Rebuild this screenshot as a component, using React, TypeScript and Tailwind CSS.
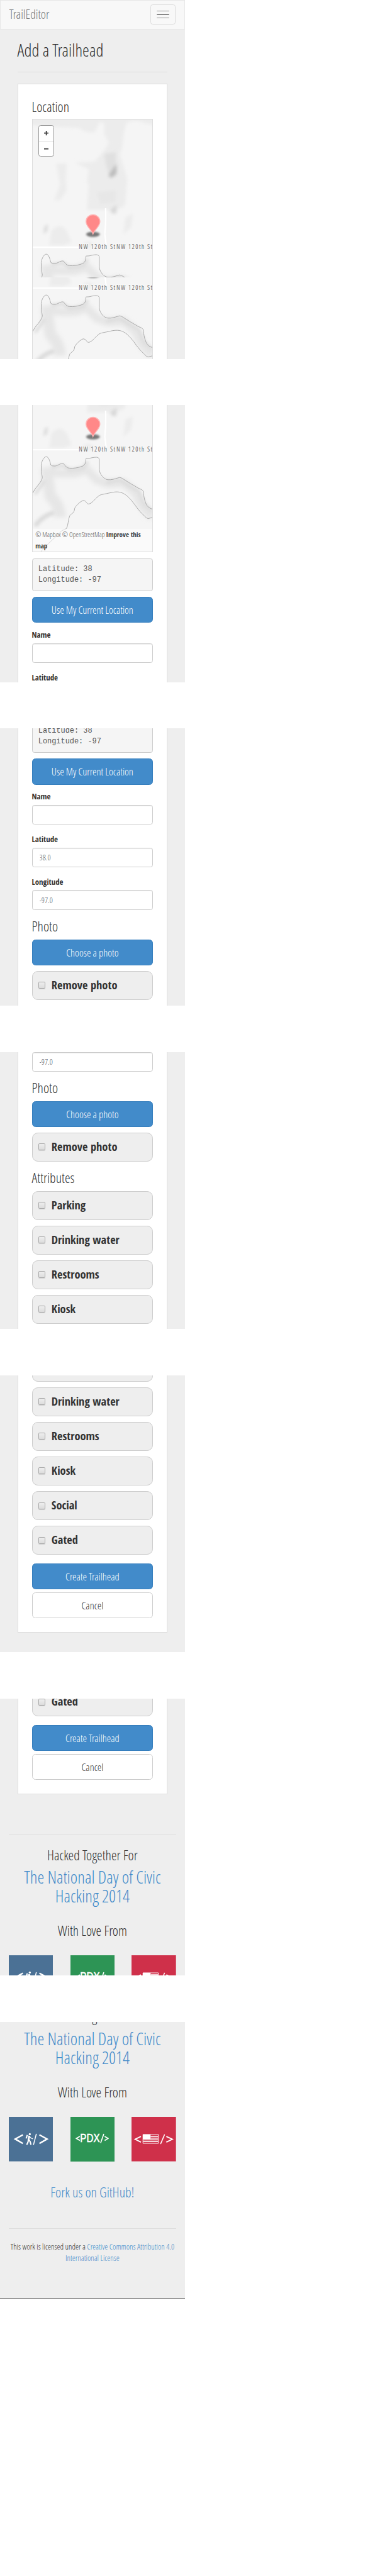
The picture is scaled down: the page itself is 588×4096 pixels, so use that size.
import type { ReactNode } from "react";

type Block = { height: number; card?: boolean; node: ReactNode };
type View = { from: number; height: number; gap: number };

function Terrain() {
  return (
    <svg className="block h-full w-full" viewBox="56 207 208 398" preserveAspectRatio="none">
      <defs>
        <filter id="soft" x="-30%" y="-30%" width="160%" height="160%">
          <feGaussianBlur stdDeviation="9" />
        </filter>
        <filter id="softer" x="-30%" y="-30%" width="160%" height="160%">
          <feGaussianBlur stdDeviation="13" />
        </filter>
        <filter id="pin" x="-30%" y="-60%" width="160%" height="220%">
          <feGaussianBlur stdDeviation="1.8" />
        </filter>
      </defs>
      <rect x="56" y="207" width="208" height="398" fill="#f5f5f5" />
      <g transform="scale(.33333)" filter="url(#soft)" fill="#ececec">
        <path d="M150 600H800V650L750 640Q700 615 655 640L640 700Q635 780 620 800L660 930L650 1060Q640 1090 560 1090H450L460 950L490 840L535 790L565 740L540 700V640L515 635L490 690L440 685L410 665L300 660L150 650Z" />
        <path d="M385 845L490 840L495 880L470 960L450 950L460 880Z" />
        <path d="M290 850L345 850L340 930L345 990L310 1040H280L310 960Z" />
        <path d="M265 1200Q310 1150 345 1200L370 1260L330 1275H255Z" />
        <path d="M430 1270Q455 1240 485 1270V1285H430ZM650 1130L690 1110L680 1180L640 1220Z" />
      </g>
      <g transform="scale(.33333)" filter="url(#soft)" fill="#e0e0e0">
        <path d="M540 800L600 790V915L570 920L550 860Z" />
        <path d="M500 1000L600 990V1050L520 1060Z" fill="#e7e7e7" />
        <path d="M230 1175L248 1165L243 1205L222 1215Z" fill="#dcdcdc" />
        <path d="M562 910L604 850V905L575 925Z" fill="#bcbcbc" />
        <path d="M570 1090L604 1065V1110H580Z" fill="#d8d8d8" />
      </g>
      <g transform="translate(0 339) scale(.33333)">
        <g filter="url(#softer)" fill="none" stroke="#e6e6e6" strokeWidth="44">
          <path d="M250 375L300 390L390 390L450 370L500 425L560 445L640 440L700 490L735 560L790 620" />
          <path d="M240 360Q245 420 260 510Q310 560 310 620" strokeWidth="60" />
        </g>
        <g filter="url(#soft)" fill="none" stroke="#dadada" strokeWidth="14">
          <path d="M265 360L325 350L360 375L430 365L455 330" />
          <path d="M550 440L620 425L720 485L745 550L790 590" />
          <path d="M180 665Q220 610 280 595" strokeWidth="22" />
          <path d="M230 430L180 500" />
        </g>
        <path d="M168 268H410M547 65Q550 130 543 200L550 255" fill="none" stroke="#fff" strokeWidth="7" />
        <g fill="none" stroke="#999" strokeWidth="2.6">
          <path d="M168 493Q178 472 195 454Q217 427 218 412Q211 380 212 348C216 320 229 304 239 304C252 306 257 328 262 347Q267 354 284 353C302 350 312 337 328 340C337 351 344 363 360 364C380 366 405 362 428 353C447 342 443 326 445 314L462 313C477 309 488 307 500 307Q515 309 514 320V372C518 398 538 422 559 424C578 426 596 419 607 416Q622 408 632 416Q680 447 718 468Q740 476 743 483C746 517 751 533 758 550Q768 572 792 577" />
          <path d="M792 620L768 626Q758 623 750 613Q725 590 709 568C691 542 667 510 641 496C620 485 600 485 570 492C545 498 528 500 518 504C496 516 477 550 458 550C447 550 448 532 430 532C413 538 389 563 386 574C385 600 365 600 360 613C352 632 353 660 344 677Q331 686 320 688Q306 703 285 723Q255 750 240 766L210 798" />
        </g>
      </g>
      <g className="[font-stretch:87.5%]" fontFamily="Open Sans, sans-serif" fontWeight="400" fontSize="11" fill="#707070" stroke="#f8f8f8" strokeWidth="2" paintOrder="stroke">
        <text x="136" y="431.7" textLength="63">NW 120th St</text>
        <text x="201" y="431" textLength="62.500">NW 120th St</text>
      </g>
      <ellipse cx="160.500" cy="406" rx="12" ry="4.500" fill="#777" filter="url(#pin)" />
      <path d="M160.500 405.500C158 398 148.500 392 148.500 384A12 12 0 0 1 172.500 384C172.500 392 163 398 160.500 405.500Z" fill="#ff8888" stroke="#ffb3b3" strokeWidth="1.6" />
    </svg>
  );
}

function MapPanel() {
  return (
    <div className="relative h-[400px] border border-[#ddd]">
      <Terrain />
      <div className="absolute top-[10px] left-[10px] flex h-[54px] w-7 flex-col rounded-[4px] border border-[#999] bg-white">
        <button className="flex flex-1 items-center justify-center border-b border-[#ddd]">
          <svg width="8" height="8" viewBox="0 0 8 8"><path d="M0 4H8M4 0V8" stroke="#404040" strokeWidth="2" /></svg>
        </button>
        <button className="flex flex-1 items-center justify-center">
          <svg width="8" height="8" viewBox="0 0 8 8"><path d="M0 4H8" stroke="#404040" strokeWidth="2" /></svg>
        </button>
      </div>
      <div className="absolute right-0 bottom-0 left-0 bg-white/50 pl-[5px] text-[12px] leading-[20px] whitespace-nowrap text-[#555]">
        <div>© Mapbox © OpenStreetMap <b className="font-['Open_Sans_Condensed'] font-bold text-[#404040]">Improve this</b></div>
        <div className="font-['Open_Sans_Condensed'] font-bold text-[#404040]">map</div>
      </div>
    </div>
  );
}

function Heading({ children }: { children: ReactNode }) {
  return <h3 className="pt-[14.500px] text-[24px] leading-[26.400px]">{children}</h3>;
}

function Button({ children, plain }: { children: ReactNode; plain?: boolean }) {
  return (
    <button
      className={
        plain
          ? "block h-[45px] w-full rounded-[6px] border border-[#ccc] bg-white text-[18px] leading-[43px] text-[#333]"
          : "block h-[45px] w-full rounded-[6px] border border-[#357ebd] bg-[#428bca] text-[18px] leading-[43px] text-white"
      }
    >
      {children}
    </button>
  );
}

function Field({ label, value }: { label: string; value?: string }) {
  return (
    <label className="flex h-full flex-col justify-end text-[14px]">
      <span className="mb-[5px] font-['Open_Sans_Condensed'] leading-5 font-bold">{label}</span>
      <input
        defaultValue={value}
        className="h-[34px] w-full rounded-[4px] border border-[#ccc] bg-white px-3 text-[14px] font-light text-[#555] shadow-[inset_0_1px_1px_rgba(0,0,0,0.075)]"
      />
    </label>
  );
}

function Check({ label }: { label: string }) {
  return (
    <label className="flex h-[50px] items-center rounded-[10px] border border-[#ccc] bg-[#eee] pl-[10px] font-['Open_Sans_Condensed'] text-[20px] leading-6 font-bold">
      <input
        type="checkbox"
        className="mr-[11px] h-3 w-3 appearance-none rounded-[2px] border border-[#a9a9a9] bg-gradient-to-b from-[#eee] to-[#dcdcdc] shadow-[0_1px_1px_rgba(0,0,0,0.12)]"
      />
      <span className="-mt-[2px]">{label}</span>
    </label>
  );
}

function HikerLogo() {
  return (
    <svg width="77" height="77" viewBox="45 531 231 231">
      <rect x="45" y="531" width="231" height="231" fill="#4b7195" />
      <g fill="none" stroke="#fff" strokeWidth="7">
        <path d="M118 624L78 646L118 669M204 624L244 646L204 669" strokeWidth="8" />
        <path d="M188 619L173 677" strokeWidth="5" />
        <path d="M151 629L147 652" strokeWidth="9" />
        <path d="M147 648L145 661L138 676M149 650L156 660L160 676" />
        <path d="M153 631L158 640L170 645" strokeWidth="4" />
        <path d="M141 625L135 643" strokeWidth="7" />
      </g>
      <circle cx="154" cy="620.500" r="5.500" fill="#fff" />
    </svg>
  );
}

function PdxLogo() {
  return (
    <div className="flex h-[77px] w-[76px] items-center justify-center bg-[#2d9455] pb-[3px]">
      <svg width="58" height="18" viewBox="0 0 58 18">
        <path d="M7.500 5.500L1.500 9L7.500 12.500M50.500 5.500L56.500 9L50.500 12.500M49 1L43.500 17" fill="none" stroke="#fff" strokeWidth="1.800" />
        <text x="8" y="15.700" textLength="34" lengthAdjust="spacingAndGlyphs" fontFamily="Liberation Sans, sans-serif" fontSize="19" fontWeight="400" stroke="#fff" strokeWidth=".6" fill="#fff">PDX</text>
      </svg>
    </div>
  );
}

function FlagLogo() {
  return (
    <svg width="77" height="77" viewBox="684 531 231 231">
      <rect x="684" y="531" width="231" height="231" fill="#cf304a" />
      <g fill="none" stroke="#fff">
        <path d="M733 633L703 647L733 662M865 633L896 647L865 662" strokeWidth="6" />
        <path d="M856 622L835 672" strokeWidth="5" />
        <path d="M743.500 622.500H823.500V668.500H743.500Z" strokeWidth="3" />
        <path d="M783 632H822M783 641H822M745 650.500H822M745 659.500H822" strokeWidth="5" />
      </g>
      <path d="M743 622H783V646H743Z" fill="#fff" />
    </svg>
  );
}

const attributes = ["Parking", "Drinking water", "Restrooms", "Kiosk", "Social", "Gated"];

const blocks: Block[] = [
  {
    height: 51,
    node: (
      <nav className="flex h-[51px] items-start justify-between border border-[#e7e7e7] bg-[#f8f8f8] px-[15px]">
        <a className="text-[21.500px] leading-[48px] text-[#777]">TrailEditor</a>
        <button className="mt-[7px] flex h-[34px] w-11 flex-col items-center justify-center gap-1 rounded-[4px] border border-[#ddd]">
          <span className="h-[2px] w-[22px] rounded-[1px] bg-[#888]" />
          <span className="h-[2px] w-[22px] rounded-[1px] bg-[#888]" />
          <span className="h-[2px] w-[22px] rounded-[1px] bg-[#888]" />
        </button>
      </nav>
    ),
  },
  {
    height: 94,
    node: (
      <div className="mx-[30px] h-[74px] border-b border-[#ddd] pt-5">
        <h2 className="text-[30px] leading-[33px]">Add a Trailhead</h2>
      </div>
    ),
  },
  {
    height: 61,
    card: true,
    node: (
      <div className="-mx-6 h-full border-t border-[#ddd] px-6 pt-[10px]"><Heading>Location</Heading></div>
    ),
  },
  { height: 400, card: true, node: <MapPanel /> },
  {
    height: 67,
    card: true,
    node: (
      <div className="h-full pt-[10px]">
        <pre className="h-[57px] rounded-[4px] border border-[#ccc] bg-[#f5f5f5] px-[10px] pt-[9px] font-['Liberation_Mono',monospace] text-[13px] leading-[18.200px] text-[#555]">{"Latitude: 38\nLongitude: -97"}</pre>
      </div>
    ),
  },
  { height: 55, card: true, node: <div className="pt-[10px]"><Button>Use My Current Location</Button></div> },
  { height: 69, card: true, node: <Field label="Name" /> },
  { height: 74, card: true, node: <Field label="Latitude" value="38.0" /> },
  { height: 74, card: true, node: <Field label="Longitude" value="-97.0" /> },
  { height: 51, card: true, node: <Heading>Photo</Heading> },
  { height: 45, card: true, node: <Button>Choose a photo</Button> },
  { height: 60, card: true, node: <div className="pt-[10px]"><Check label="Remove photo" /></div> },
  { height: 51, card: true, node: <Heading>Attributes</Heading> },
  ...attributes.map((label) => ({
    height: label === "Gated" ? 50 : 60,
    card: true,
    node: <Check label={label} />,
  })),
  { height: 60, card: true, node: <div className="pt-[15px]"><Button>Create Trailhead</Button></div> },
  {
    height: 75,
    card: true,
    node: <div className="-mx-6 h-[75px] border-b border-[#ddd] px-6 pt-[5px]"><Button plain>Cancel</Button></div>,
  },
  { height: 71, node: <div className="mx-[15px] h-full border-b border-[#ddd]" /> },
  {
    height: 56,
    node: <h3 className="pt-5 text-center text-[24px] leading-[26.400px]">Hacked Together For</h3>,
  },
  {
    height: 66,
    node: (
      <h2 className="text-center text-[30px] leading-[33px] text-[#428bca]">
        The National Day of Civic<br />Hacking 2014
      </h2>
    ),
  },
  {
    height: 86,
    node: <h3 className="pt-[29.500px] text-center text-[24px] leading-[26.400px]">With Love From</h3>,
  },
  {
    height: 77,
    node: (
      <div className="mx-[15px] flex justify-between">
        <HikerLogo />
        <PdxLogo />
        <FlagLogo />
      </div>
    ),
  },
  {
    height: 117,
    node: (
      <h3 className="mx-[15px] h-full border-b border-[#ddd] pt-[39.500px] text-center text-[24px] leading-[26.400px] text-[#428bca]">
        Fork us on GitHub!
      </h3>
    ),
  },
  {
    height: 121,
    node: (
      <div className="h-full border-b border-[#777] pt-[20px] text-center text-[14px] leading-5 whitespace-nowrap">
        This work is licensed under a <a className="text-[#428bca]">Creative Commons Attribution 4.0<br />International License</a>
      </div>
    ),
  },
];

const views: View[] = [
  { from: 0, height: 480, gap: 0 },
  { from: 409, height: 142, gap: 80 },
  { from: 351, height: 480, gap: 80 },
  { from: 631, height: 480, gap: 80 },
  { from: 911, height: 480, gap: 80 },
  { from: 1191, height: 480, gap: 80 },
  { from: 1471, height: 480, gap: 80 },
  { from: 1751, height: 480, gap: 0 },
];

function PageView({ from, height, gap }: View) {
  let top = 0;
  const placed = blocks.map((block) => {
    const start = top;
    top += block.height;
    return { ...block, start };
  });
  const visible = placed.filter((b) => b.start + b.height > from && b.start < from + height);
  return (
    <section className="w-[320px] overflow-hidden bg-[#eee]" style={{ height, marginBottom: gap }}>
      <div style={{ marginTop: visible[0].start - from }}>
        {visible.map((b) => (
          <div key={b.start} style={{ height: b.height }}>
            {b.card ? (
              <div className="mx-[30px] h-full border-x border-[#ddd] bg-white px-6">{b.node}</div>
            ) : (
              b.node
            )}
          </div>
        ))}
      </div>
    </section>
  );
}

export default function App() {
  return (
    <div className="h-[4096px] w-[588px] overflow-hidden bg-white">
      <main className="flex flex-col font-['Open_Sans_Condensed_Light','Open_Sans',sans-serif] font-light text-[#333] [zoom:0.918]">
        {views.map((view) => (
          <PageView key={view.from} {...view} />
        ))}
      </main>
    </div>
  );
}
